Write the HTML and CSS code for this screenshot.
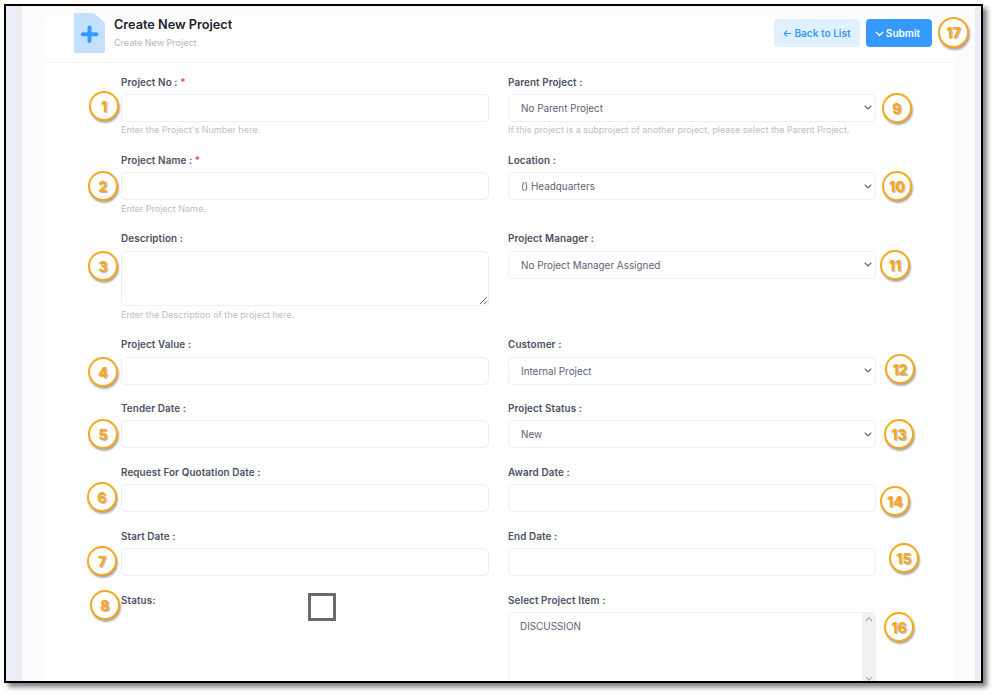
FILE: index.html
```html
<!DOCTYPE html>
<html lang="en">
<head>
<meta charset="utf-8">
<title>Create New Project</title>
<link rel="stylesheet" href="styles.css">
</head>
<body>
<div class="frame">
  <div class="backdrop">
    <main class="card">
      <header class="card-head">
        <svg class="doc-icon" viewBox="0 0 31 40" width="31" height="40" aria-hidden="true">
          <path d="M1 0H20L31 10V39a1 1 0 0 1-1 1H1a1 1 0 0 1-1-1V1a1 1 0 0 1 1-1Z" fill="#c4e0ff"/>
          <path d="M15.500 14.500V28M8.700 21.200H22.300" stroke="#3699ff" stroke-width="4" stroke-linecap="round" fill="none"/>
        </svg>
        <div class="titles">
          <h1 class="title">Create New Project</h1>
          <p class="subtitle">Create New Project</p>
        </div>
        <div class="actions">
          <button class="btn btn-light" type="button">
            <svg viewBox="0 0 10 10" width="9" height="9" aria-hidden="true"><path d="M9 5H1.500M4.500 1.800 1.300 5l3.200 3.200" fill="none" stroke="currentColor" stroke-width="1.200"/></svg>
            Back to List
          </button>
          <button class="btn btn-primary" type="button">
            <svg viewBox="0 0 10 10" width="9" height="9" aria-hidden="true"><path d="M1 3.200 5 7.200 9 3.200" fill="none" stroke="currentColor" stroke-width="1.500"/></svg>
            Submit
          </button>
        </div>
      </header>
      <form class="form">
        <div class="field">
          <label class="label">Project No : <span class="req">*</span></label>
          <input class="control" type="text">
          <p class="help">Enter the Project's Number here.</p>
        </div>
        <div class="field">
          <label class="label">Parent Project :</label>
          <select class="control select"><option>No Parent Project</option></select>
          <p class="help">If this project is a subproject of another project, please select the Parent Project.</p>
        </div>
        <div class="field">
          <label class="label">Project Name : <span class="req">*</span></label>
          <input class="control" type="text">
          <p class="help">Enter Project Name.</p>
        </div>
        <div class="field">
          <label class="label">Location :</label>
          <select class="control select"><option>() Headquarters</option></select>
        </div>
        <div class="field">
          <label class="label">Description :</label>
          <textarea class="control area"></textarea>
          <p class="help">Enter the Description of the project here.</p>
        </div>
        <div class="field">
          <label class="label">Project Manager :</label>
          <select class="control select"><option>No Project Manager Assigned</option></select>
        </div>
        <div class="field">
          <label class="label">Project Value :</label>
          <input class="control" type="text">
        </div>
        <div class="field">
          <label class="label">Customer :</label>
          <select class="control select"><option>Internal Project</option></select>
        </div>
        <div class="field">
          <label class="label">Tender Date :</label>
          <input class="control" type="text">
        </div>
        <div class="field">
          <label class="label">Project Status :</label>
          <select class="control select"><option>New</option></select>
        </div>
        <div class="field">
          <label class="label">Request For Quotation Date :</label>
          <input class="control" type="text">
        </div>
        <div class="field">
          <label class="label">Award Date :</label>
          <input class="control" type="text">
        </div>
        <div class="field">
          <label class="label">Start Date :</label>
          <input class="control" type="text">
        </div>
        <div class="field">
          <label class="label">End Date :</label>
          <input class="control" type="text">
        </div>
        <div class="field field-inline">
          <label class="label label-status">Status:</label>
          <span class="checkbox"></span>
        </div>
        <div class="field">
          <label class="label">Select Project Item :</label>
          <div class="listbox">
            <div class="list-items">DISCUSSION</div>
            <div class="list-track">
              <svg viewBox="0 0 10 6" width="8" height="5" aria-hidden="true"><path d="M1 5 5 1 9 5" fill="none" stroke="#a8a8a8" stroke-width="1.400"/></svg>
              <svg viewBox="0 0 10 6" width="8" height="5" aria-hidden="true"><path d="M1 1 5 5 9 1" fill="none" stroke="#a8a8a8" stroke-width="1.400"/></svg>
            </div>
          </div>
        </div>
      </form>
    </main>
  </div>
  <span class="badge b1">1</span>
  <span class="badge b2">2</span>
  <span class="badge b3">3</span>
  <span class="badge b4">4</span>
  <span class="badge b5">5</span>
  <span class="badge b6">6</span>
  <span class="badge b7">7</span>
  <span class="badge b8">8</span>
  <span class="badge b9">9</span>
  <span class="badge b10">10</span>
  <span class="badge b11">11</span>
  <span class="badge b12">12</span>
  <span class="badge b13">13</span>
  <span class="badge b14">14</span>
  <span class="badge b15">15</span>
  <span class="badge b16">16</span>
  <span class="badge b17">17</span>
</div>
</body>
</html>
```
FILE: styles.css
```css
* { box-sizing: border-box; }
html, body { margin: 0; padding: 0; background: #fff; }
body { font-family: Inter, "Open Sans", sans-serif; overflow: hidden; height: 696px; }

.frame {
  position: relative;
  width: 979px;
  height: 679px;
  margin: 4px 0 0 4px;
  border: 2px solid #000;
  box-shadow: 4px 4px 5px rgba(0, 0, 0, .5);
  overflow: hidden;
  background: #fff;
}
.backdrop {
  height: 100%;
  margin-left: 16px;
  margin-right: 6px;
  padding: 0 21px 0 22px;
  background: #fbfbfd;
  box-shadow: -16px 0 0 #eaecf6, 6px 0 0 #eaecf6;
}
.card { background: #fff; height: 100%; }
.card-head {
  display: flex;
  align-items: flex-start;
  height: 57px;
  padding: 7px 22px 0 30px;
  border-bottom: 1px solid #f3f4f8;
  background: linear-gradient(#f9f9f9, #fff 14px);
}
.doc-icon { flex: none; }
.titles { margin-left: 9px; }
.title {
  margin: 4px 0 0;
  font-size: 12.700px;
  line-height: 16px;
  font-weight: 600;
  color: #1d2130;
}
.subtitle {
  margin: 4px 0 0;
  font-size: 9px;
  line-height: 12px;
  color: #b5b5c3;
}
.actions { margin-left: auto; margin-top: 6px; display: flex; gap: 6px; }
.btn {
  display: flex;
  align-items: center;
  justify-content: center;
  gap: 2px;
  height: 28px;
  border: 0;
  border-radius: 4px;
  font: 600 10.100px Inter, sans-serif;
  padding: 0;
}
.btn-light { width: 86px; background: #e1f0ff; color: #3699ff; }
.btn-primary { width: 66px; padding-right: 3px; background: #3699ff; color: #fff; }

.form {
  display: grid;
  grid-template-columns: 368px 368px;
  column-gap: 19px;
  row-gap: 16.600px;
  padding: 11.600px 0 0 77px;
}
.label {
  display: block;
  height: 14px;
  margin-bottom: 5.400px;
  font-size: 9.900px;
  line-height: 14px;
  font-weight: 600;
  letter-spacing: .1px;
  color: #4b4f63;
}
.req { color: #f1416c; }
.control {
  display: block;
  width: 100%;
  height: 28px;
  margin: 0;
  border: 1px solid #eceef3;
  border-radius: 5px;
  background-color: #fff;
  font: 9.900px Inter, sans-serif;
  color: #5e6278;
  outline: 0;
}
.select {
  appearance: none;
  padding: 0 20px 0 12px;
  background-image: url("data:image/svg+xml,%3Csvg xmlns='http://www.w3.org/2000/svg' width='8' height='5' viewBox='0 0 8 5'%3E%3Cpath d='M.7.8 4 4 7.300.8' fill='none' stroke='%23666' stroke-width='1.200'/%3E%3C/svg%3E");
  background-repeat: no-repeat;
  background-position: right 3px center;
}
.area { height: 55.400px; }
.help {
  height: 12px;
  margin: 2.400px 0 0;
  font-size: 9px;
  line-height: 12px;
  color: #bdbcc8;
  white-space: nowrap;
}
.field-inline { display: flex; align-items: flex-start; }
.label-status { flex: 0 0 187px; margin: 0; }
.checkbox {
  display: block;
  width: 28px;
  height: 28px;
  border: 3px solid #6a6a6a;
}
.listbox {
  display: flex;
  height: 74px;
  border: 1px solid #eceef3;
  border-radius: 5px;
  overflow: hidden;
  font-size: 9.900px;
  color: #5e6278;
}
.list-items { flex: 1; padding: 7px 0 0 11px; line-height: 12px; }
.list-track {
  flex: 0 0 13px;
  display: flex;
  flex-direction: column;
  align-items: center;
  justify-content: space-between;
  padding: 4px 0;
  background: #f1f1f1;
}

.badge {
  position: absolute;
  width: 30px;
  height: 30px;
  display: flex;
  align-items: center;
  justify-content: center;
  border: 2px solid #f5a81c;
  border-radius: 50%;
  background: #fff;
  box-shadow: 1px 2px 2px rgba(0, 0, 0, .35);
  font-size: 14px;
  font-weight: 800;
  color: #f5a81c;
  text-shadow: 1px 1px 1px rgba(0, 0, 0, .3);
}
.b1 { left: 83px; top: 85px; }
.b2 { left: 82px; top: 165px; }
.b3 { left: 82px; top: 245px; }
.b4 { left: 82px; top: 351px; }
.b5 { left: 82px; top: 413px; }
.b6 { left: 81px; top: 476px; }
.b7 { left: 81px; top: 540px; }
.b8 { left: 84px; top: 584px; }
.b9 { left: 876px; top: 87px; }
.b10 { left: 876px; top: 165px; }
.b11 { left: 874px; top: 244px; }
.b12 { left: 879px; top: 348px; }
.b13 { left: 878px; top: 413px; }
.b14 { left: 874px; top: 480px; }
.b15 { left: 883px; top: 537px; }
.b16 { left: 878px; top: 606px; }
.b17 { left: 932px; top: 11px; width: 31px; height: 31px; }
```
